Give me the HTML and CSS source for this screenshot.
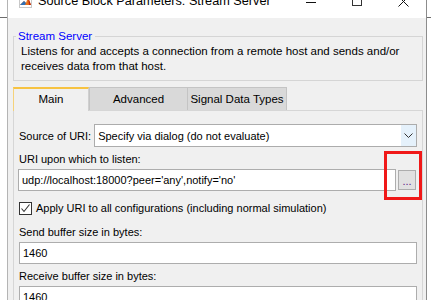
FILE: index.html
```html
<!DOCTYPE html>
<html lang="en">

<head>
    <meta charset="UTF-8">
    <title>Source Block Parameters: Stream Server</title>
    <link rel="stylesheet" href="styles.css">
</head>

<body>

    <div class="window">
        <div class="titlebar">
            <div class="title-left">
                <svg class="app-icon" width="13" height="13" viewBox="0 0 13 13">
                    <rect x="0.5" y="0.5" width="12" height="12" fill="#fff" stroke="#c8c8c8" />
                    <path d="M1 10 L5 6 L7 8 L9 2 L12 10 Z" fill="#e8701a" />
                    <path d="M5 6 L7 8 L6 10 L1 10 Z" fill="#2f6fb5" />
                    <path d="M9 2 L12 10 L10 10 Z" fill="#b8260f" />
                </svg>
                <span class="title">Source Block Parameters: Stream Server</span>
            </div>
            <div class="controls">
                <div class="ctl"><span class="ctl-min"></span></div>
                <div class="ctl"><span class="ctl-max"></span></div>
                <div class="ctl">
                    <svg width="11" height="11" viewBox="0 0 11 11">
                        <path d="M0.5 0.5 L10.5 10.5 M10.5 0.5 L0.5 10.5" stroke="#111" stroke-width="1" />
                    </svg>
                </div>
            </div>
        </div>

        <div class="client">
            <fieldset class="group">
                <legend>Stream Server</legend>
                <p>Listens for and accepts a connection from a remote host and sends and/or<br>receives data from that host.</p>
            </fieldset>

            <div class="tabs">
                <div class="tab active">Main</div>
                <div class="tab tab-adv">Advanced</div>
                <div class="tab tab-sig">Signal Data Types</div>
            </div>

            <div class="panel">
                <div class="source-row">
                    <span class="label">Source of URI:</span>
                    <div class="select">
                        <span class="select-text">Specify via dialog (do not evaluate)</span>
                        <span class="select-arrow">
                            <svg width="9" height="5" viewBox="0 0 9 5">
                                <path d="M0.5 0.5 L4.5 4.5 L8.5 0.5" fill="none" stroke="#333" stroke-width="1" />
                            </svg>
                        </span>
                    </div>
                </div>

                <div class="label field-label">URI upon which to listen:</div>
                <div class="uri-row">
                    <div class="edit uri-edit">udp://localhost:18000?peer='any',notify='no'</div>
                    <div class="browse">...</div>
                    <div class="highlight"></div>
                </div>

                <div class="check-row">
                    <span class="checkbox">
                        <svg width="11" height="11" viewBox="0 0 11 11">
                            <path d="M1.5 5.5 L4 8.5 L9.5 1.5" fill="none" stroke="#333" stroke-width="1.1" />
                        </svg>
                    </span>
                    <span class="label">Apply URI to all configurations (including normal simulation)</span>
                </div>

                <div class="label field-label">Send buffer size in bytes:</div>
                <div class="edit">1460</div>

                <div class="label field-label">Receive buffer size in bytes:</div>
                <div class="edit">1460</div>
            </div>
        </div>
    </div>

</body>

</html>
```

FILE: styles.css
```css
* {
    padding: 0;
    margin: 0;
    box-sizing: border-box;
}

body {
    width: 431px;
    height: 300px;
    overflow: hidden;
    font-family: 'Liberation Sans', Arial, sans-serif;
    font-size: 11px;
    color: #000;
    background: linear-gradient(#fff 17px, #6d6d6d 17px, #6d6d6d 18px, #fff 18px);
}

.window {
    margin-left: 7px;
    width: 420px;
    height: 300px;
    border-left: 1px solid #b4b4b4;
    border-right: 1px solid #8c8c8c;
    background: #f0f0f0;
}

/* title bar, cut at the top of the shot */
.titlebar {
    height: 18px;
    background: #fff;
    display: flex;
    justify-content: space-between;
    overflow: hidden;
}

.title-left {
    display: flex;
    align-items: center;
    margin-top: -9px;
    padding-left: 11px;
    height: 20px;
}

.app-icon {
    margin-right: 6px;
}

.title {
    font-family: 'Liberation Sans', Arial, sans-serif;
    font-size: 12.7px;
    color: #000;
    white-space: nowrap;
}

.controls {
    display: flex;
    margin-top: -5px;
}

.ctl {
    width: 46px;
    height: 12px;
    display: flex;
    align-items: center;
    justify-content: center;
}

.ctl-min {
    width: 10px;
    height: 1px;
    background: #111;
    margin-top: 3px;
}

.ctl-max {
    width: 10px;
    height: 10px;
    border: 1px solid #333;
}

.client {
    padding: 11px 3px 0 5px;
}

/* group box */
.group {
    border: 1px solid #d5d5d5;
    padding: 0 6px 6px 2px;
}

.group legend {
    color: #0000ff;
    font-size: 11.5px;
    padding: 0 3px 0 2px;
    line-height: 14px;
}

.group p {
    margin: 1px 0 0 5px;
    font-size: 11.5px;
    line-height: 15px;
    white-space: nowrap;
}

/* tabs */
.tabs {
    display: flex;
    margin-top: 6px;
    height: 23px;
    align-items: flex-end;
}

.tab {
    height: 23px;
    line-height: 22px;
    font-size: 11.5px;
    text-align: center;
    background: #d9d9d9;
    border: 1px solid #c4c4c4;
    border-bottom: none;
    white-space: nowrap;
}

.tab.active {
    width: 76px;
    background: #f0f0f0;
    border-top: 2px solid #f7c342;
    border-left: 1px solid #f5d27a;
    border-right: 1px solid #d0d0d0;
    line-height: 21px;
    height: 24px;
    margin-bottom: -1px;
    position: relative;
}

.tab-adv {
    width: 99px;
}

.tab-sig {
    width: 100px;
    margin-left: -1px;
}

/* tab page */
.panel {
    border: 1px solid #d6d6d6;
    height: 200px;
    padding: 13px 5px 0 5px;
}

.label {
    line-height: 14px;
    white-space: nowrap;
}

.source-row {
    display: flex;
    align-items: center;
    gap: 3px;
}

.select {
    flex: 1;
    height: 23px;
    border: 1px solid #acacac;
    background: #fff;
    display: flex;
    align-items: center;
}

.select-text {
    flex: 1;
    padding-left: 3px;
}

.select-arrow {
    width: 15px;
    height: 21px;
    background: #e5f1fb;
    display: flex;
    align-items: center;
    justify-content: center;
}

.field-label {
    margin-top: 5px;
    height: 14px;
}

.edit {
    margin-top: 3px;
    height: 22px;
    line-height: 20px;
    border: 1px solid #adadad;
    background: #fff;
    padding-left: 3px;
    white-space: nowrap;
    overflow: hidden;
}

.uri-row {
    display: flex;
    align-items: flex-start;
    gap: 2px;
    position: relative;
}

.uri-edit {
    width: 378px;
    margin-left: -1px;
}

.browse {
    margin-top: 4px;
    width: 18px;
    height: 20px;
    border: 1px solid #adadad;
    background: #e1e1e1;
    color: #5b1a86;
    text-align: center;
    line-height: 20px;
    font-size: 11px;
}

.highlight {
    position: absolute;
    left: 365px;
    top: -15px;
    width: 38px;
    height: 49px;
    border: 3px solid #f01818;
}

.check-row {
    display: flex;
    align-items: center;
    gap: 4px;
    margin-top: 10px;
}

.checkbox {
    width: 13px;
    height: 13px;
    border: 1px solid #333;
    background: #fff;
    display: flex;
    align-items: center;
    justify-content: center;
}

.check-row + .field-label {
    margin-top: 10px;
}
```
